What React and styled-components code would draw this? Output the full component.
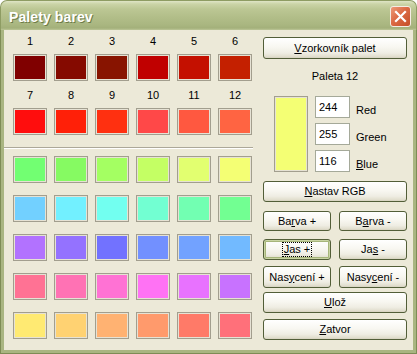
import React from "react";
import styled, { createGlobalStyle, css } from "styled-components";

const Global = createGlobalStyle`
  html, body { margin: 0; padding: 0; background: #ffffff; }
  body { font-family: "Liberation Sans", Arial, sans-serif; font-size: 11px; }
`;

const Window = styled.div`
  width: 417px;
  height: 354px;
  display: flex;
  flex-direction: column;
  font-family: "Liberation Sans", Arial, sans-serif;
  font-size: 11px;
  color: #000;
`;

const TitleBar = styled.div`
  flex: none;
  height: 30px;
  box-sizing: border-box;
  display: flex;
  align-items: center;
  justify-content: space-between;
  padding: 0 5px 0 8px;
  border-radius: 7px 7px 0 0;
  border: 1px solid #8e9c63;
  border-bottom: none;
  background: linear-gradient(
    to bottom,
    #dfe5c6 0px,
    #cbd4a7 3px,
    #bcc794 8px,
    #b2be89 16px,
    #a9b680 24px,
    #a3b07a 27px,
    #bcc697 29px
  );
`;

const Title = styled.span`
  padding-top: 3px;
  font: bold 14px "Liberation Sans", Arial, sans-serif;
  color: #ffffff;
  text-shadow: 1px 1px 0 #6e7c48;
  letter-spacing: 0.1px;
`;

const CloseButton = styled.div`
  width: 21px;
  height: 21px;
  margin-top: 1px;
  box-sizing: border-box;
  border: 1px solid #f4ece4;
  border-radius: 3px;
  background: linear-gradient(135deg, #ec9a78 0%, #dc6a44 45%, #c44e28 100%);
  display: flex;
  align-items: center;
  justify-content: center;
`;

const FrameOuter = styled.div`
  flex: 1;
  display: flex;
  border: 1px solid #7e8c55;
  border-top: none;
`;

const Frame = styled.div`
  flex: 1;
  display: flex;
  background: #ece9d8;
  border: 3px solid #a9b581;
  border-top: none;
`;

const LeftPanel = styled.div`
  width: 254px;
  box-sizing: border-box;
  padding: 5px 0 0 9px;
  display: flex;
  flex-direction: column;
`;

const TopGrid = styled.div`
  display: grid;
  grid-template-columns: repeat(6, 34px);
  column-gap: 7px;
  row-gap: 8px;
`;

const Cell = styled.div`
  display: flex;
  flex-direction: column;
  align-items: center;
`;

const Num = styled.div`
  line-height: 13px;
  height: 13px;
  margin-bottom: 6px;
  font-size: 11px;
`;

const Swatch = styled.div`
  width: 34px;
  height: 27px;
  box-sizing: border-box;
  border: 1px solid #a29e8e;
  box-shadow: inset 0 0 0 1px #e6e2d4;
  background: ${(p) => p.$color};
`;

const Separator = styled.div`
  margin: 12px 0 0 -9px;
  width: 249px;
  border-top: 1px solid #aca899;
  border-bottom: 1px solid #ffffff;
`;

const BottomGrid = styled.div`
  margin-top: 7px;
  display: grid;
  grid-template-columns: repeat(6, 34px);
  column-gap: 7px;
  row-gap: 12px;
`;

const RightPanel = styled.div`
  width: 144px;
  margin-left: 5px;
  padding-top: 7px;
  display: flex;
  flex-direction: column;
`;

const Btn = styled.div`
  box-sizing: border-box;
  width: ${(p) => (p.$w ? `${p.$w}px` : "100%")};
  height: ${(p) => p.$h || 21}px;
  margin-top: ${(p) => p.$mt || 0}px;
  border: 1px solid #525e38;
  border-radius: 3px;
  background: linear-gradient(
    to bottom,
    #ffffff 0%,
    #f8f7f1 45%,
    #efede3 75%,
    #e2dfcf 92%,
    #d6d2c0 100%
  );
  display: flex;
  align-items: center;
  justify-content: center;
  font: 11px "Liberation Sans", Arial, sans-serif;
  color: #000;
  white-space: pre;
  ${(p) =>
    p.$focused &&
    css`
      box-shadow: inset 0 0 0 1px #c9d4a3, inset 0 0 0 2px #a6b57a;
    `}
`;

const BtnText = styled.span`
  line-height: 13px;
  white-space: pre;
  ${(p) =>
    p.$focused &&
    css`
      outline: 1px dotted #000;
      padding: 0 1px;
    `}
`;

const BtnRow = styled.div`
  display: flex;
  gap: 8px;
  margin-top: ${(p) => p.$mt || 0}px;
`;

const Caption = styled.div`
  margin-top: 11px;
  line-height: 13px;
  text-align: center;
`;

const ColorRow = styled.div`
  margin-top: 13px;
  display: flex;
`;

const Preview = styled.div`
  width: 34px;
  height: 76px;
  margin-left: 11px;
  box-sizing: border-box;
  border: 1px solid #a29e8e;
  box-shadow: inset 0 0 0 1px #e6e2d4;
  background: ${(p) => p.$color};
`;

const ValueGrid = styled.div`
  margin-left: 7px;
  display: grid;
  grid-template-columns: 35px auto;
  grid-auto-rows: 22px;
  row-gap: 5px;
  column-gap: 6px;
`;

const ValueBox = styled.div`
  box-sizing: border-box;
  height: 22px;
  border: 1px solid #a5a999;
  background: #ffffff;
  padding: 0 0 0 3px;
  display: flex;
  align-items: center;
`;

const ValueLabel = styled.div`
  padding-top: 8px;
  line-height: 13px;
`;

const U = styled.span`
  text-decoration: underline;
`;

const topColors = [
  "#800000", "#850a00", "#881400", "#c00000", "#c41000", "#c42000",
  "#ff0d0d", "#ff2008", "#ff3010", "#ff4848", "#ff5840", "#ff6442",
];

const lowerColors = [
  "#72ff72", "#86fa62", "#a4ff62", "#c4ff64", "#e2ff70", "#f4ff74",
  "#72d0ff", "#72f0ff", "#72fff0", "#72ffd2", "#72ffb2", "#72ff92",
  "#b272ff", "#9472ff", "#7272ff", "#7290ff", "#72a2ff", "#72baff",
  "#ff7294", "#ff72b4", "#ff72d4", "#ff72f4", "#e872ff", "#c872ff",
  "#ffea72", "#ffd272", "#ffb272", "#ff9a6c", "#ff7a68", "#ff707a",
];

export default function App() {
  return (
    <>
      <Global />
      <Window>
        <TitleBar>
          <Title>Palety barev</Title>
          <CloseButton>
            <svg width="13" height="13" viewBox="0 0 13 13">
              <path
                d="M2 2 L11 11 M11 2 L2 11"
                stroke="#ffffff"
                strokeWidth="2.2"
                strokeLinecap="square"
              />
            </svg>
          </CloseButton>
        </TitleBar>
        <FrameOuter>
          <Frame>
            <LeftPanel>
              <TopGrid>
                {topColors.map((c, i) => (
                  <Cell key={i}>
                    <Num>{i + 1}</Num>
                    <Swatch $color={c} />
                  </Cell>
                ))}
              </TopGrid>
              <Separator />
              <BottomGrid>
                {lowerColors.map((c, i) => (
                  <Swatch key={i} $color={c} />
                ))}
              </BottomGrid>
            </LeftPanel>
            <RightPanel>
              <Btn $h={22}>
                <BtnText>
                  <U>V</U>zorkovník palet
                </BtnText>
              </Btn>
              <Caption>Paleta 12</Caption>
              <ColorRow>
                <Preview $color="#f4ff74" />
                <ValueGrid>
                  <ValueBox>244</ValueBox>
                  <ValueLabel>Red</ValueLabel>
                  <ValueBox>255</ValueBox>
                  <ValueLabel>Green</ValueLabel>
                  <ValueBox>116</ValueBox>
                  <ValueLabel>
                    <U>B</U>lue
                  </ValueLabel>
                </ValueGrid>
              </ColorRow>
              <Btn $mt={9}>
                <BtnText>
                  <U>N</U>astav RGB
                </BtnText>
              </Btn>
              <BtnRow $mt={9}>
                <Btn $w={68} $h={20}>
                  <BtnText>
                    Ba<U>r</U>va +
                  </BtnText>
                </Btn>
                <Btn $w={68} $h={20}>
                  <BtnText>
                    B<U>a</U>rva -
                  </BtnText>
                </Btn>
              </BtnRow>
              <BtnRow $mt={8}>
                <Btn $w={68} $focused>
                  <BtnText $focused>
                    <U>J</U>as +
                  </BtnText>
                </Btn>
                <Btn $w={68}>
                  <BtnText>
                    Ja<U>s</U>{" -"}
                  </BtnText>
                </Btn>
              </BtnRow>
              <BtnRow $mt={6}>
                <Btn $w={68} $h={22}>
                  <BtnText>
                    Nas<U>y</U>cení +
                  </BtnText>
                </Btn>
                <Btn $w={68} $h={22}>
                  <BtnText>
                    Nasy<U>c</U>ení -
                  </BtnText>
                </Btn>
              </BtnRow>
              <Btn $mt={4}>
                <BtnText>
                  <U>U</U>lož
                </BtnText>
              </Btn>
              <Btn $mt={6}>
                <BtnText>
                  <U>Z</U>atvor
                </BtnText>
              </Btn>
            </RightPanel>
          </Frame>
        </FrameOuter>
      </Window>
    </>
  );
}
